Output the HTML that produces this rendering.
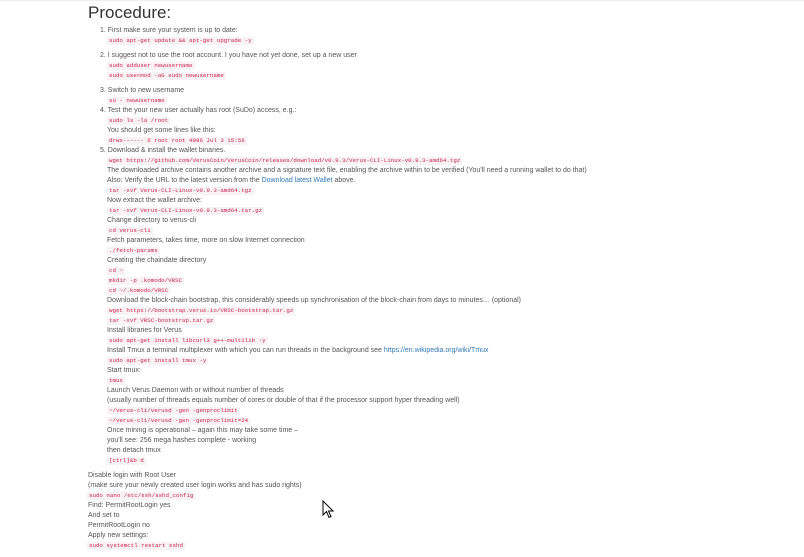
<!DOCTYPE html>
<html><head><meta charset="utf-8"><style>
body{margin:0;width:804px;height:557px;background:#fff;position:relative;overflow:hidden;font-family:"Liberation Sans",Arial,sans-serif;color:#555;}
.l{position:absolute;font-size:7px;line-height:9px;white-space:nowrap;}
.c{position:absolute;font-family:"Liberation Mono",monospace;font-size:5.8px;line-height:8px;color:#c7254e;background:#f9f2f4;padding:0 2px;white-space:nowrap;}
a{color:#337ab7;text-decoration:none}
h1{position:absolute;left:88px;top:3px;margin:0;font-weight:normal;font-size:17px;color:#333;}
</style></head><body>
<div style="position:absolute;left:0;top:0;width:804px;height:1px;background:#eee"></div>
<h1>Procedure:</h1>
<div class="l" style="left:100px;top:26px">1. First make sure your system is up to date:</div>
<div class="c" style="left:107px;top:37px">sudo apt-get update &amp;&amp; apt-get upgrade -y</div>
<div class="l" style="left:100px;top:51px">2. I suggest not to use the root account. I you have not yet done, set up a new user</div>
<div class="c" style="left:107px;top:62px">sudo adduser newusername</div>
<div class="c" style="left:107px;top:72px">sudo usermod -aG sudo newusername</div>
<div class="l" style="left:100px;top:86px">3. Switch to new username</div>
<div class="c" style="left:107px;top:97px">su - newusername</div>
<div class="l" style="left:100px;top:106px">4. Test the your new user actually has root (SuDo) access, e.g.:</div>
<div class="c" style="left:107px;top:117px">sudo ls -la /root</div>
<div class="l" style="left:107px;top:126px">You should get some lines like this:</div>
<div class="c" style="left:107px;top:137px">drwx------ 6 root root 4096 Jul 3 15:56</div>
<div class="l" style="left:100px;top:146px">5. Download &amp; install the wallet binaries.</div>
<div class="c" style="left:107px;top:157px">wget https://github.com/VerusCoin/VerusCoin/releases/download/v0.9.3/Verus-CLI-Linux-v0.9.3-amd64.tgz</div>
<div class="l" style="left:107px;top:166px">The downloaded archive contains another archive and a signature text file, enabling the archive within to be verified (You'll need a running wallet to do that)</div>
<div class="l" style="left:107px;top:176px">Also: Verify the URL to the latest version from the <a>Download latest Wallet</a> above.</div>
<div class="c" style="left:107px;top:187px">tar -xvf Verus-CLI-Linux-v0.9.3-amd64.tgz</div>
<div class="l" style="left:107px;top:196px">Now extract the wallet archive:</div>
<div class="c" style="left:107px;top:207px">tar -xvf Verus-CLI-Linux-v0.9.3-amd64.tar.gz</div>
<div class="l" style="left:107px;top:216px">Change directory to verus-cli</div>
<div class="c" style="left:107px;top:227px">cd verus-cli</div>
<div class="l" style="left:107px;top:236px">Fetch parameters, takes time, more on slow Internet connection</div>
<div class="c" style="left:107px;top:247px">./fetch-params</div>
<div class="l" style="left:107px;top:256px">Creating the chaindate directory</div>
<div class="c" style="left:107px;top:267px">cd ~</div>
<div class="c" style="left:107px;top:277px">mkdir -p .komodo/VRSC</div>
<div class="c" style="left:107px;top:287px">cd ~/.komodo/VRSC</div>
<div class="l" style="left:107px;top:296px">Download the block-chain bootstrap, this considerably speeds up synchronisation of the block-chain from days to minutes… (optional)</div>
<div class="c" style="left:107px;top:307px">wget https://bootstrap.verus.io/VRSC-bootstrap.tar.gz</div>
<div class="c" style="left:107px;top:317px">tar -xvf VRSC-bootstrap.tar.gz</div>
<div class="l" style="left:107px;top:326px">Install libraries for Verus</div>
<div class="c" style="left:107px;top:337px">sudo apt-get install libcurl3 g++-multilib -y</div>
<div class="l" style="left:107px;top:346px">Install Tmux a terminal multiplexer with which you can run threads in the background see <a>https://en.wikipedia.org/wiki/Tmux</a></div>
<div class="c" style="left:107px;top:357px">sudo apt-get install tmux -y</div>
<div class="l" style="left:107px;top:366px">Start tmux:</div>
<div class="c" style="left:107px;top:377px">tmux</div>
<div class="l" style="left:107px;top:386px">Launch Verus Daemon with or without number of threads</div>
<div class="l" style="left:107px;top:396px">(usually number of threads equals number of cores or double of that if the processor support hyper threading well)</div>
<div class="c" style="left:107px;top:407px">~/verus-cli/verusd -gen -genproclimit</div>
<div class="c" style="left:107px;top:417px">~/verus-cli/verusd -gen -genproclimit=24</div>
<div class="l" style="left:107px;top:426px">Once mining is operational – again this may take some time –</div>
<div class="l" style="left:107px;top:436px">you'll see: 256 mega hashes complete - working</div>
<div class="l" style="left:107px;top:446px">then detach tmux</div>
<div class="c" style="left:107px;top:457px">[ctrl]&amp;b d</div>
<div class="l" style="left:88px;top:471px">Disable login with Root User</div>
<div class="l" style="left:88px;top:481px">(make sure your newly created user login works and has sudo rights)</div>
<div class="c" style="left:87px;top:492px">sudo nano /etc/ssh/sshd_config</div>
<div class="l" style="left:88px;top:501px">Find: PermitRootLogin yes</div>
<div class="l" style="left:88px;top:511px">And set to</div>
<div class="l" style="left:88px;top:521px">PermitRootLogin no</div>
<div class="l" style="left:88px;top:531px">Apply new settings:</div>
<div class="c" style="left:87px;top:542px">sudo systemctl restart sshd</div>
<svg style="position:absolute;left:322px;top:500px" width="14" height="20" viewBox="0 0 14 20"><path d="M1 1 L1 15 L4.5 11.5 L7 17.5 L9 16.5 L6.5 11 L11 11 Z" fill="#fff" stroke="#000" stroke-width="1"/></svg>
</body></html>
